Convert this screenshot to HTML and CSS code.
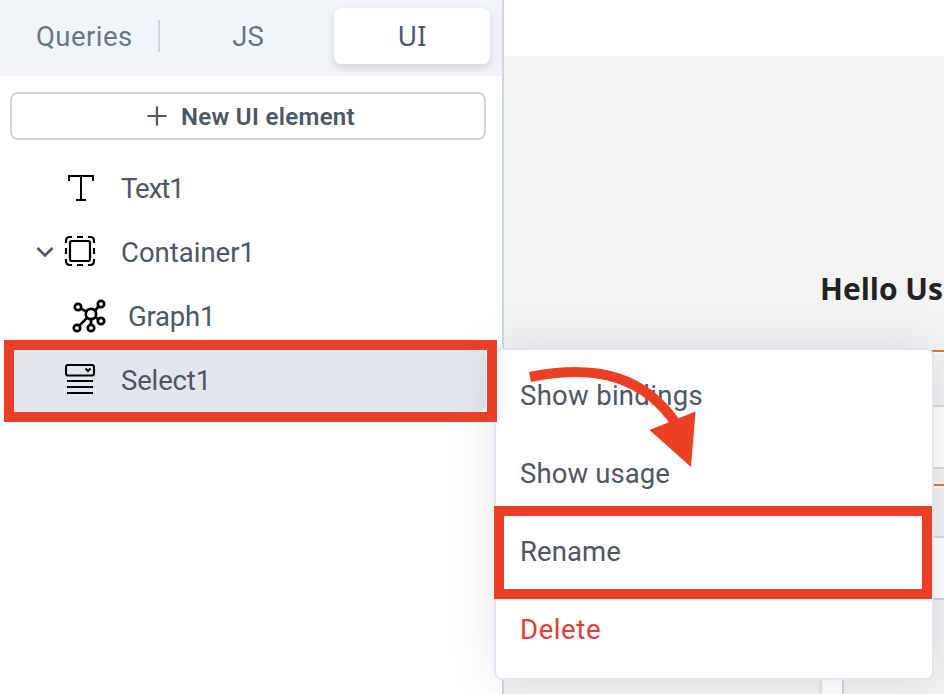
FILE: index.html
```html
<!DOCTYPE html>
<html lang="en">
<head>
<meta charset="utf-8">
<title>Explorer</title>
<link rel="stylesheet" href="styles.css">
</head>
<body>
<div class="app">
  <aside class="sidebar">
    <nav class="tabs">
      <span class="tab tab-queries">Queries</span>
      <span class="tab tab-js">JS</span>
      <span class="tab tab-active">UI</span>
    </nav>
    <button class="new-element">
      <svg width="20" height="20" viewBox="0 0 20 20" fill="none" stroke="currentColor" stroke-width="2.200"><path d="M10 .5v19M.5 10h19"/></svg>
      <span>New UI element</span>
    </button>
    <ul class="tree">
      <li class="row">
        <svg class="icon" width="32" height="32" viewBox="0 0 32 32" fill="none" stroke="currentColor" stroke-width="2"><path d="M5 9V4h24v5M17 4v24M12 28h10"/></svg>
        <span class="name text">Text1</span>
      </li>
      <li class="row">
        <svg class="chevron" width="18" height="12" viewBox="0 0 18 12" fill="none" stroke="currentColor" stroke-width="2.500"><path d="M1.500 2 9 9.500 16.500 2"/></svg>
        <svg class="icon" width="32" height="32" viewBox="0 0 32 32" fill="none" stroke="currentColor" stroke-width="2.200"><rect x="6" y="5" width="20" height="20" rx="2"/><path d="M2 7V5q0-4 4-4h2M24 1h2q4 0 4 4v2M30 23v2q0 4-4 4h-2M8 29H6q-4 0-4-4v-2M13 1h6M13 29h6M2 12v6M30 12v6"/></svg>
        <span class="name container">Container1</span>
      </li>
      <li class="row nested">
        <svg class="icon" width="34" height="34" viewBox="0 0 34 34" fill="none" stroke="currentColor" stroke-width="2.700"><circle cx="19" cy="15" r="5.200"/><circle cx="6" cy="8" r="3.200"/><circle cx="29" cy="5" r="3.200"/><circle cx="29" cy="22" r="3.200"/><circle cx="5" cy="29" r="3.200"/><circle cx="19" cy="29" r="3.200"/><path d="m9 9.600 5.400 3M23 11.500l3.600-4M23.300 18l3 2.200M15.200 18.600 7.400 26.600M19 20.200v5.600"/></svg>
        <span class="name graph">Graph1</span>
      </li>
      <li class="row selected">
        <svg class="icon" width="32" height="32" viewBox="0 0 32 32" fill="none" stroke="currentColor" stroke-width="2.100"><rect x="2" y="1" width="28" height="10.500" rx="2"/><path d="m21.500 4.500 2.500 2.500 2.500-2.500M3 17h26M3 23h26M3 29h26"/></svg>
        <span class="name select">Select1</span>
      </li>
    </ul>
  </aside>
  <main class="canvas">
    <div class="topbar"></div>
    <h1 class="heading">Hello Us</h1>
    <div class="form">
      <div class="rule"></div>
      <div class="field"></div>
      <div class="rule second"></div>
      <div class="field last"></div>
    </div>
    <div class="panel"></div>
  </main>
</div>
<div class="menu">
  <span class="item bindings">Show bindings</span>
  <span class="item usage">Show usage</span>
  <span class="item rename">Rename</span>
  <span class="item delete">Delete</span>
</div>
<div class="mark mark-row"></div>
<div class="mark mark-rename"></div>
<svg class="arrow" width="180" height="110" viewBox="525 360 180 110"><path d="M530 377C598 363 646 378 677 425" fill="none" stroke="#eb4025" stroke-width="10"/><path d="M649.500 430 695.500 411.500 691 467Z" fill="#eb4025"/></svg>
</body>
</html>
```

FILE: styles.css
```css
* { box-sizing: border-box; }
body { margin: 0; width: 944px; height: 694px; overflow: hidden; background: #fff; color: #4c5664; font-family: Roboto, sans-serif; font-size: 27.5px; }
.app { display: flex; height: 694px; }
.sidebar { flex: 0 0 504px; border-right: 2px solid #cdd5e1; }
.tabs { height: 76px; background: #f1f5fa; display: flex; padding: 8px 12px 12px 0; color: #6a7585; line-height: 58px; }
.tab-queries { width: 160px; padding-left: 36px; letter-spacing: .45px; background: linear-gradient(#cdd5e1, #cdd5e1) right 12px / 2px 32px no-repeat; }
.tab-js { width: 174px; text-align: center; padding-left: 2px; }
.tab-active { flex: 1; text-align: center; color: #4c5664; background: #fff; border-radius: 8px; box-shadow: 0 4px 10px rgba(0, 0, 0, .13); font-family: "Noto Sans", sans-serif; font-size: 27px; line-height: 55px; }
.new-element { display: flex; align-items: center; width: 476px; height: 48px; margin: 16px 0 0 10px; padding: 0 0 0 135px; gap: 14px; border: 2px solid #cdd5e1; border-radius: 8px; background: #fff; color: #4c5664; font: 600 24px/44px Roboto, sans-serif; letter-spacing: .32px; white-space: nowrap; }
.new-element span { padding-top: 2px; }
.tree { list-style: none; margin: 16px 0 0; padding: 0; }
.row { display: flex; align-items: center; height: 64px; width: 486px; padding-left: 64px; line-height: 64px; }
.name { padding-top: 2px; }
.text { letter-spacing: -1px; }
.graph { letter-spacing: -.2px; }
.select { letter-spacing: -.15px; }
.icon { flex: none; color: #000; margin-right: 25px; }
.chevron { margin: 0 10px 0 -28px; }
.nested { padding-left: 72px; }
.nested .icon { margin-right: 22px; }
.selected { width: 476px; margin-left: 10px; padding-left: 54px; background: #e3e6ee; border-radius: 0 8px 8px 0; }
.canvas { flex: 1; background: #f3f3f3; overflow: hidden; display: flex; flex-direction: column; }
.topbar { height: 56px; flex: none; background: #fff; }
.heading { margin: 213px 0 0 316px; height: 40px; font: 700 30px/40px "Open Sans", sans-serif; color: #222; white-space: nowrap; }
.form { margin: 41px 0 0 400px; }
.rule { height: 2px; background: #eb7338; box-shadow: 0 0 0 2px #fafafa; }
.rule.second { margin-top: 15px; }
.field { height: 64px; margin-top: 53px; border: solid #dadada; border-width: 2px 0; background: #fff; }
.field.last { margin-top: 50px; border-bottom-color: #cdd5e1; }
.panel { flex: none; width: 22px; height: 94px; margin-left: 318px; background: #fff; border-right: 2px solid #cdd5e1; box-shadow: -2px 0 4px rgba(0, 0, 0, .1); }
.menu { position: absolute; left: 494px; top: 348px; width: 440px; height: 332px; border: 2px solid #e1e6ef; border-radius: 8px; background: #fff; display: flex; flex-direction: column; padding: 8px 0 8px 24px; box-shadow: 0 0 48px rgba(0, 0, 0, .1); }
.item { height: 78px; line-height: 76px; }
.bindings { letter-spacing: .3px; }
.usage { letter-spacing: .1px; }
.rename { letter-spacing: .1px; }
.delete { color: #e03e37; letter-spacing: .6px; }
.mark { position: absolute; border: 10px solid #eb4025; }
.mark-row { left: 4px; top: 340px; width: 493px; height: 82px; }
.mark-rename { left: 494px; top: 506px; width: 438px; height: 93px; }
.arrow { position: absolute; left: 525px; top: 360px; }
```
